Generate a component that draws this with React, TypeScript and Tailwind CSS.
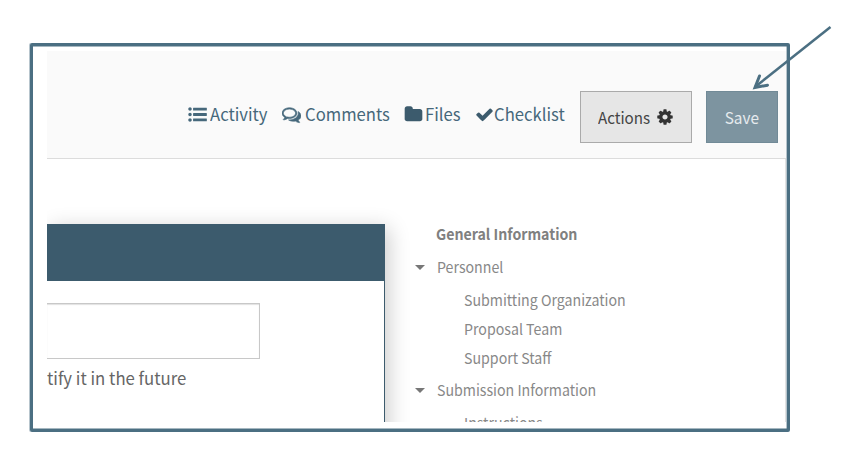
import type { ReactNode } from "react";

const LIST =
  "M352 1408q0 70-46 116t-116 46-116-46-46-116 46-116 116-46 116 46 46 116zm0-512q0 70-46 116t-116 46-116-46-46-116 46-116 116-46 116 46 46 116zm0-512q0 70-46 116t-116 46-116-46-46-116 46-116 116-46 116 46 46 116zM512 250h1230q34 0 34 34v200q0 34-34 34h-1230q-34 0-34-34v-200q0-34 34-34zm0 512h1230q34 0 34 34v200q0 34-34 34h-1230q-34 0-34-34v-200q0-34 34-34zm0 512h1230q34 0 34 34v200q0 34-34 34h-1230q-34 0-34-34v-200q0-34 34-34z";
const COMMENTS =
  "M704 384q-153 0-286 52t-211.500 141-78.500 191q0 82 53 158t149 132l97 56-35 84q34-20 62-39l44-31 53 10q78 14 153 14 153 0 286-52t211.500-141 78.500-191-78.500-191-211.500-141-286-52zm0-128q191 0 353.500 68.500t256.500 186.500 94 257-94 257-256.500 186.500-353.500 68.500q-86 0-176-16-124 88-278 128-36 9-86 16h-3q-11 0-20.500-8t-11.500-21q-1-3-1-6.500t.5-6.500 2-6l2.500-5 3.500-5.500 4-5 4.500-5 4-4.500q5-6 23-25t26-29.500 22.500-29 25-38.500 20.500-44q-124-72-195-177t-71-224q0-139 94-257t256.500-186.500 353.500-68.500zm822 1169q10 24 20.500 44t25 38.500 22.500 29 26 29.500 23 25q1 1 4 4.500t4.500 5 4 5 3.500 5.500l2.500 5 2 6 .5 6.500-1 6.500q-3 14-13 22t-22 7q-50-7-86-16-154-40-278-128-90 16-176 16-271 0-472-132 58 4 88 4 161 0 309-45t264-129q125-92 192-212t67-254q0-77-23-152 129 71 204 178t75 230q0 120-71 224.500t-195 176.500z";
const FOLDER =
  "M1728 608v704q0 92-66 158t-158 66h-1216q-92 0-158-66t-66-158v-960q0-92 66-158t158-66h320q92 0 158 66t66 158v32h672q92 0 158 66t66 158z";
const CHECK =
  "M1671 566q0 40-28 68l-724 724-136 136q-28 28-68 28t-68-28l-136-136-362-362q-28-28-28-68t28-68l136-136q28-28 68-28t68 28l294 295 656-657q28-28 68-28t68 28l136 136q28 28 28 68z";
const COG =
  "M1152 896q0-106-75-181t-181-75-181 75-75 181 75 181 181 75 181-75 75-181zm512-109v222q0 12-8 23t-20 13l-185 28q-19 54-39 91 35 50 107 138 10 12 10 25t-9 23q-27 37-99 108t-94 71q-12 0-26-9l-138-108q-44 23-91 38-16 136-29 186-7 28-36 28h-222q-14 0-24.500-8.500t-11.500-21.500l-28-184q-49-16-90-37l-141 107q-10 9-25 9-14 0-25-11-126-114-165-168-7-10-7-23 0-12 8-23 15-21 51-66.500t54-70.500q-27-50-41-99l-183-27q-13-2-21-12.500t-8-23.500v-222q0-12 8-23t19-13l186-28q14-46 39-92-40-57-107-138-10-12-10-24 0-10 9-23 26-36 98.500-107.500t94.500-71.500q13 0 26 10l138 107q44-23 91-38 16-136 29-186 7-28 36-28h222q14 0 24.500 8.500t11.500 21.500l28 184q49 16 90 37l142-107q9-9 24-9 13 0 25 10 129 119 165 170 7 8 7 22 0 12-8 23-15 21-51 66.500t-54 70.500q26 50 41 98l183 28q13 2 21 12.500t8 23.500z";

function Icon({ d, className }: { d: string; className: string }) {
  return (
    <svg viewBox="0 0 1792 1792" fill="currentColor" className={`shrink-0 ${className}`} aria-hidden="true">
      <path d={d} />
    </svg>
  );
}

function NavLink({ d, icon, width, children }: { d: string; icon: string; width: string; children: ReactNode }) {
  return (
    <a className={`flex h-6 shrink-0 items-center whitespace-nowrap ${width}`}>
      <Icon d={d} className={icon} />
      <span className="origin-left scale-x-[0.980]">{children}</span>
    </a>
  );
}

function Section({ children }: { children: ReactNode }) {
  return (
    <div className="flex h-[33px] items-center">
      <span className="mr-[12px] ml-px h-0 w-0 border-x-[5px] border-t-[5px] border-x-transparent border-t-[#777]" />
      <span className="origin-left scale-x-[0.945]">{children}</span>
    </div>
  );
}

export default function App() {
  return (
    <div className="relative h-[467px] w-[846px] overflow-hidden bg-white pt-[43px] pl-[30px] font-['Noto_Sans_CJK_SC','Open_Sans',sans-serif]">
      <div className="h-[389px] w-[760px] rounded-[2px] border-[3px] border-[#4b6f82] pt-[5px] pr-px pl-[14px] shadow-[-1px_0_0_rgba(75,111,130,0.4),inset_-1px_0_0_rgba(75,111,130,0.4),inset_0_1px_0_rgba(75,111,130,0.5),inset_0_-1px_0_rgba(75,111,130,0.5)]">
        <div className="flex h-[371px] w-full flex-col overflow-hidden">
          <header className="flex h-[108px] shrink-0 border-b border-[#dcdcdc] bg-[#fafafa] pl-[141px]">
            <nav className="flex pt-[51px] text-[17px] text-[#46687b]">
              <NavLink d={LIST} icon="mr-[3px] h-[19px] w-[19px]" width="w-[94px]">Activity</NavLink>
              <NavLink d={COMMENTS} icon="mr-[4px] h-[19px] w-[19px] stroke-current stroke-[60]" width="w-[122px]">Comments</NavLink>
              <NavLink d={FOLDER} icon="mr-[2px] h-[19px] w-[19px] text-[#3c5b6d]" width="w-[71px]">Files</NavLink>
              <NavLink d={CHECK} icon="h-[19px] w-[19px] text-[#3c5b6d]" width="w-[105px]">Checklist</NavLink>
            </nav>
            <div className="flex gap-[14px] pt-10 text-base">
              <button className="flex h-[52px] w-[112px] items-center border border-[#aaa] bg-[#e6e6e6] pl-[17px] text-[#444]">
                <span className="w-[58px] origin-left scale-x-[0.945] text-left">Actions</span>
                <Icon d={COG} className="h-[18px] w-[18px] text-[#333]" />
              </button>
              <button className="flex h-[52px] w-[72px] shrink-0 items-center justify-center border border-[#718a97] bg-[#7d94a0] text-[#e6ebee]">
                <span className="scale-x-[0.960]">Save</span>
              </button>
            </div>
          </header>
          <main className="flex min-h-0 flex-1 border-r border-[#e2e2e2]">
            <div className="w-[367px] shrink-0 overflow-hidden pt-[65px]">
              <section className="h-[250px] w-[338px] border-r border-[#3c5b6d] bg-white shadow-[4px_4px_20px_rgba(0,0,0,0.2)]">
                <div className="h-[57px] bg-[#3c5b6d]" />
                <div className="pt-[22px]">
                  <div className="h-[56px] w-[213px] border border-l-0 border-[#c8c8c8] shadow-[inset_0_1px_1px_rgba(0,0,0,0.12)]" />
                  <p className="mt-[7px] origin-left scale-x-[0.985] text-[17px] leading-6 text-[#666]">tify it in the future</p>
                </div>
              </section>
            </div>
            <nav className="pt-[59px] text-[15px] whitespace-nowrap text-[#888]">
              <div className="flex h-[33px] items-center pl-[22px] font-bold text-[#808080]">
                <span className="origin-left scale-x-[0.945]">General Information</span>
              </div>
              <Section>Personnel</Section>
              <div className="ml-[50px] origin-left scale-x-[0.945] pt-px pb-[2px] leading-[29px]">
                <div>Submitting Organization</div>
                <div>Proposal Team</div>
                <div>Support Staff</div>
              </div>
              <Section>Submission Information</Section>
              <div className="ml-[50px] origin-left scale-x-[0.945] pt-px leading-[29px]">Instructions</div>
            </nav>
          </main>
        </div>
      </div>
      <svg viewBox="0 0 846 467" className="pointer-events-none absolute inset-0 h-full w-full" fill="none" stroke="#4b6f82" aria-hidden="true">
        <path d="M830.500 27 755 87" strokeWidth="2.500" />
        <path d="M759.500 76 755 87.500 767.500 85.200" strokeWidth="3" strokeLinecap="round" />
      </svg>
    </div>
  );
}
